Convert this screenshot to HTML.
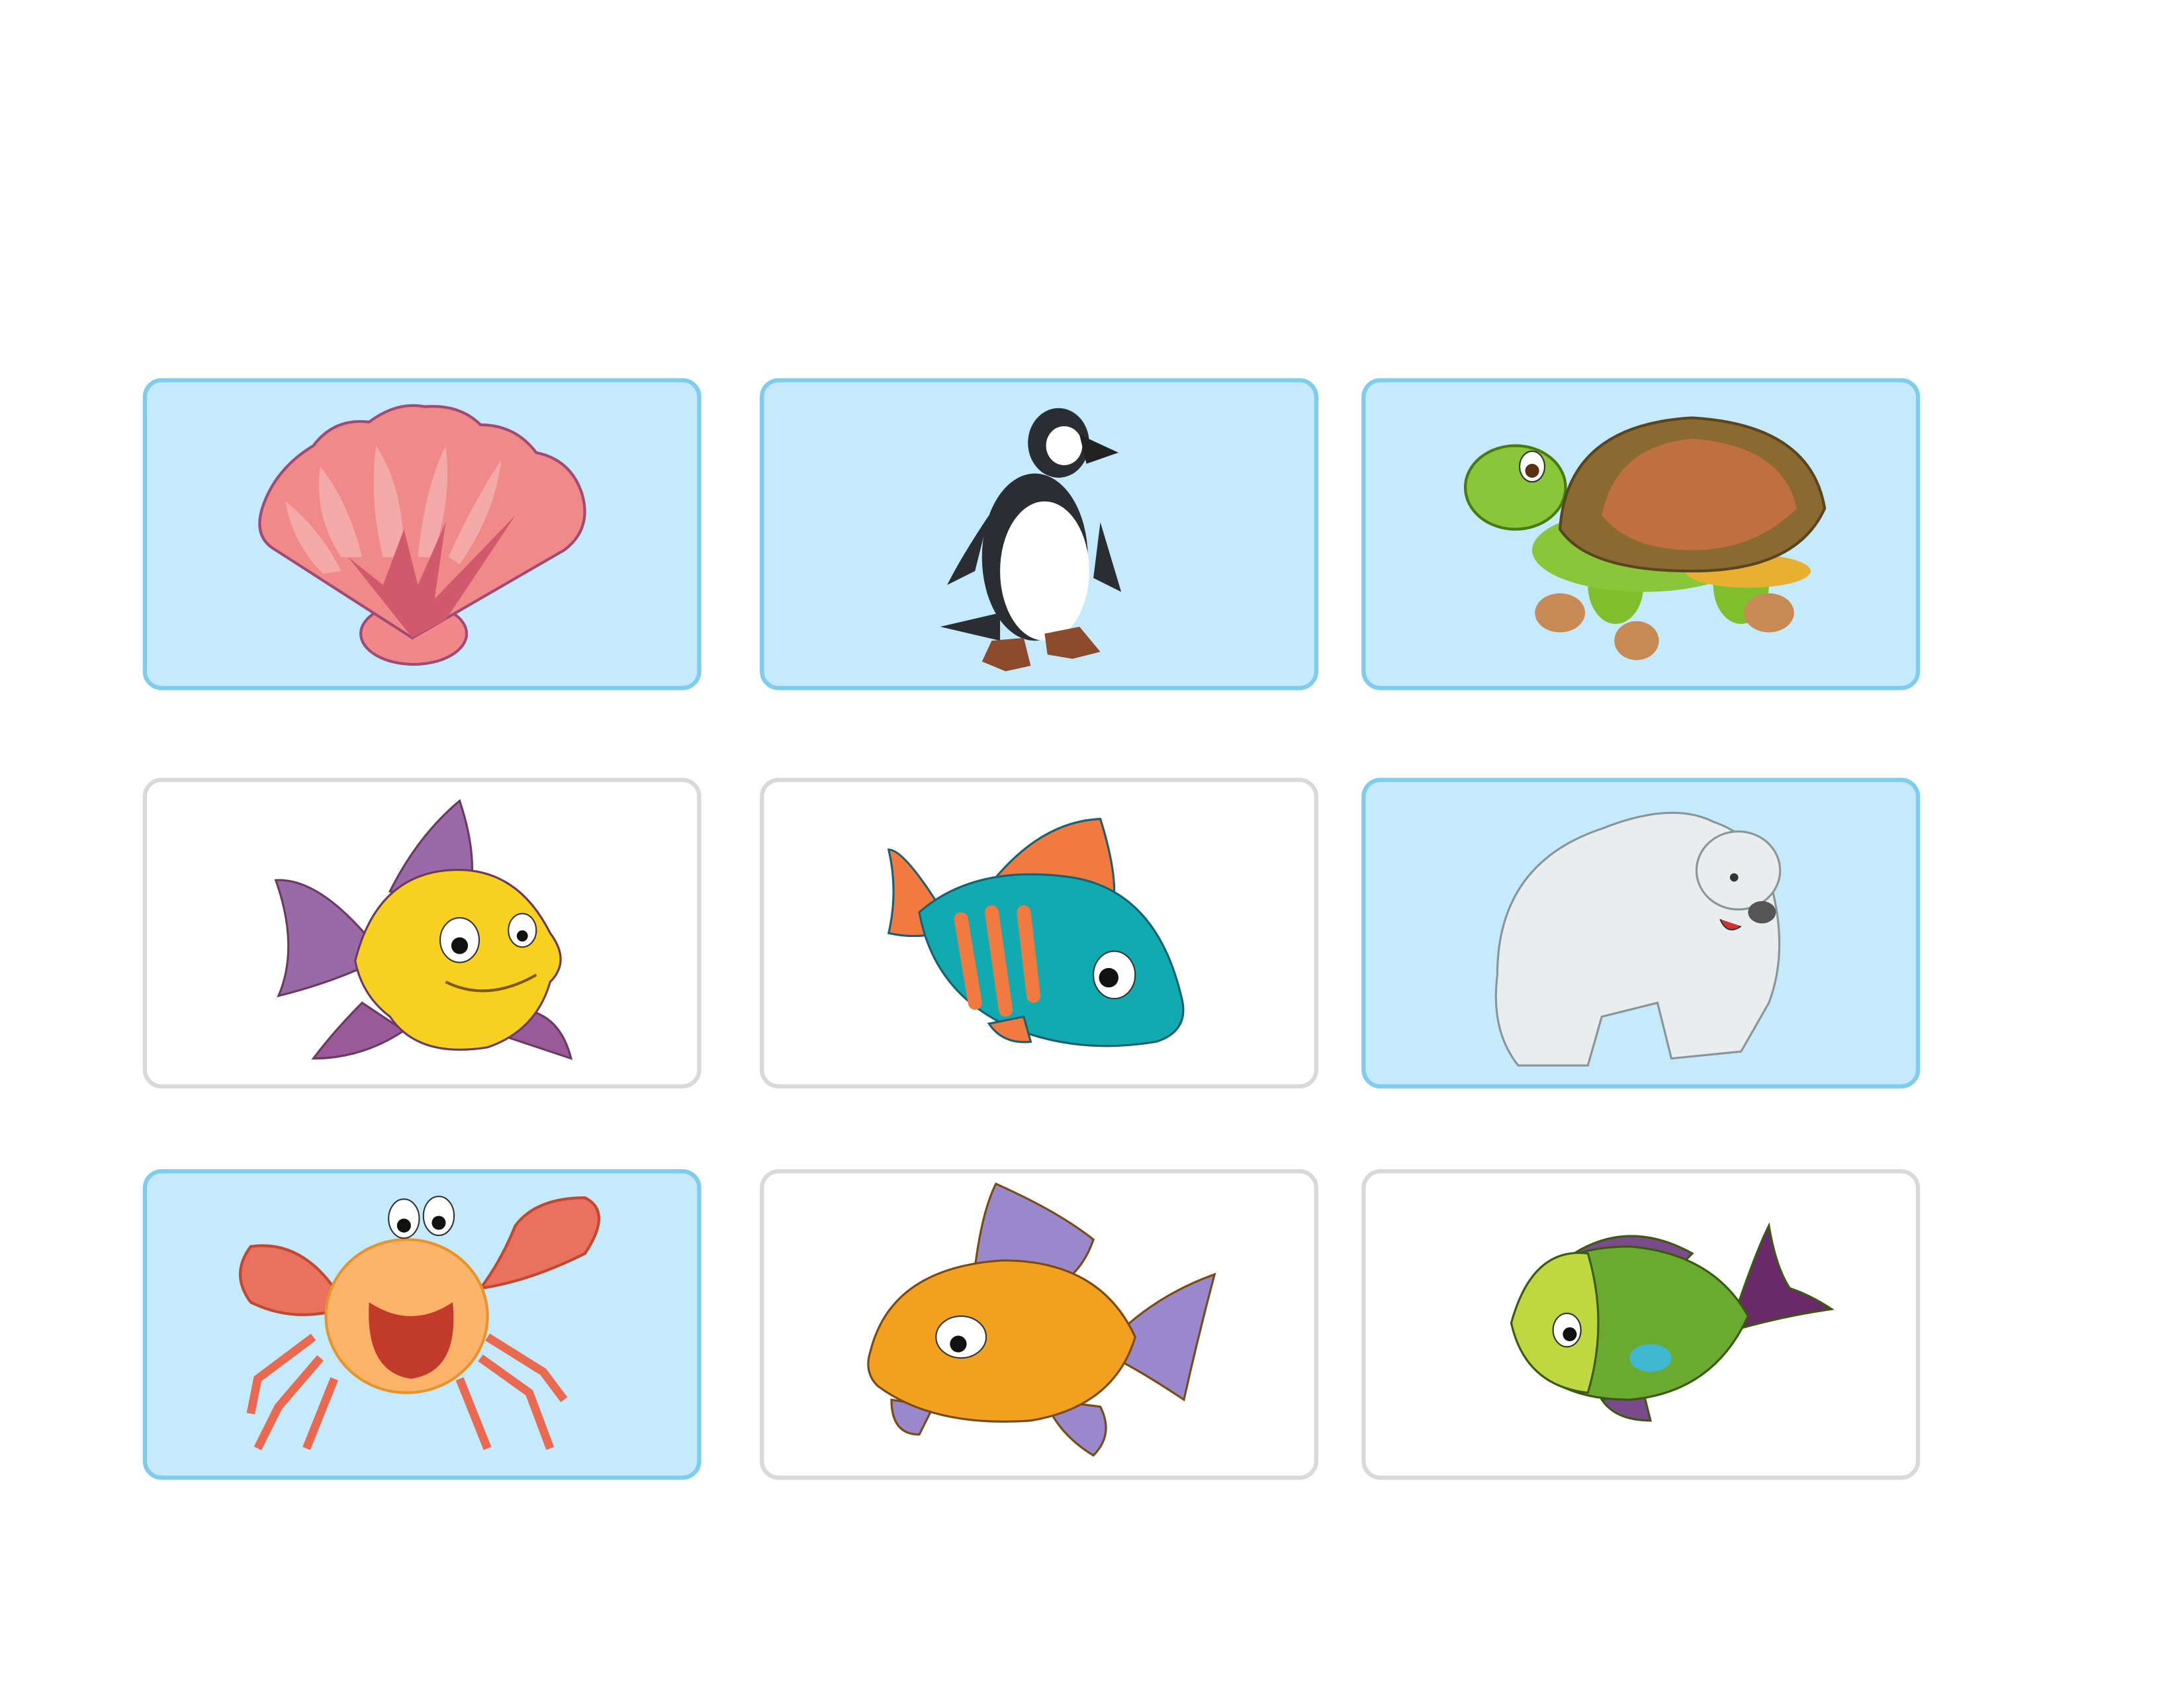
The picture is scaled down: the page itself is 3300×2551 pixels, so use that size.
<!DOCTYPE html>
<html><head><meta charset="utf-8"><style>
html,body{margin:0;padding:0;background:#fff;width:3300px;height:2551px;overflow:hidden}
svg{display:block}
</style></head><body>
<svg width="3300" height="2551" viewBox="0 0 1568 1212" preserveAspectRatio="none" xmlns="http://www.w3.org/2000/svg">
<g stroke-width="3">
<rect x="104" y="273" width="398" height="221" rx="12" fill="#c5eafb" stroke="#7fcdee"/>
<rect x="547" y="273" width="398" height="221" rx="12" fill="#c5eafb" stroke="#7fcdee"/>
<rect x="979" y="273" width="398" height="221" rx="12" fill="#c5eafb" stroke="#7fcdee"/>
<rect x="104" y="560" width="398" height="220" rx="12" fill="#fff" stroke="#d9d9d9"/>
<rect x="547" y="560" width="398" height="220" rx="12" fill="#fff" stroke="#d9d9d9"/>
<rect x="979" y="560" width="398" height="220" rx="12" fill="#c5eafb" stroke="#7fcdee"/>
<rect x="104" y="841" width="398" height="220" rx="12" fill="#c5eafb" stroke="#7fcdee"/>
<rect x="547" y="841" width="398" height="220" rx="12" fill="#fff" stroke="#d9d9d9"/>
<rect x="979" y="841" width="398" height="220" rx="12" fill="#fff" stroke="#d9d9d9"/>
</g>
<!-- shell -->
<g stroke="#a04a78" stroke-width="2">
<ellipse cx="297" cy="455" rx="38" ry="22" fill="#f0888a"/>
<path d="M296 458 L198 395 Q180 385 190 360 Q200 335 225 320 Q240 300 265 303 Q285 288 305 292 Q330 290 345 305 Q370 305 385 325 Q410 330 418 355 Q425 380 405 395 Z" fill="#f08a88"/>
</g>
<g fill="#f4aaa8"><path d="M230 335 Q250 360 260 400 L245 400 Q225 370 230 335Z"/><path d="M270 320 Q290 350 290 400 L275 400 Q265 360 270 320Z"/><path d="M320 320 Q325 360 310 400 L300 400 Q305 350 320 320Z"/><path d="M360 330 Q355 370 330 405 L322 400 Q340 360 360 330Z"/><path d="M205 360 Q230 380 245 410 L232 412 Q210 390 205 360Z"/></g>
<path d="M296 458 L250 400 L275 420 L290 380 L300 420 L320 375 L312 430 L370 370 L320 445Z" fill="#d05a6c"/>
<!-- penguin -->
<g>
<ellipse cx="743" cy="400" rx="38" ry="60" fill="#2a2e33"/>
<ellipse cx="750" cy="410" rx="32" ry="50" fill="#fff"/>
<ellipse cx="760" cy="318" rx="22" ry="25" fill="#2a2e33"/>
<ellipse cx="764" cy="320" rx="13" ry="14" fill="#fff"/>
<path d="M775 312 L803 325 L780 333Z" fill="#222"/>
<path d="M710 370 Q690 400 680 420 L700 410Z" fill="#2a2e33"/>
<path d="M718 440 L675 450 L718 460Z" fill="#2a2e33"/>
<path d="M790 375 L805 425 L785 415Z" fill="#2a2e33"/>
<path d="M712 460 L735 458 L740 478 L722 482 L705 475Z" fill="#8b4a2b"/>
<path d="M750 455 L775 450 L790 468 L770 473 L752 470Z" fill="#8b4a2b"/>
</g>
<!-- turtle -->
<g>
<ellipse cx="1160" cy="420" rx="20" ry="28" fill="#7fbf2b"/>
<ellipse cx="1250" cy="420" rx="20" ry="28" fill="#7fbf2b"/>
<ellipse cx="1180" cy="395" rx="80" ry="30" fill="#8ac63a"/>
<ellipse cx="1120" cy="440" rx="18" ry="14" fill="#c88a55"/>
<ellipse cx="1175" cy="460" rx="16" ry="14" fill="#c88a55"/>
<ellipse cx="1270" cy="440" rx="18" ry="14" fill="#c88a55"/>
<ellipse cx="1255" cy="410" rx="45" ry="12" fill="#e8b030"/>
<ellipse cx="1088" cy="350" rx="36" ry="30" fill="#8ac63a" stroke="#4a7a10" stroke-width="2"/>
<ellipse cx="1100" cy="335" rx="9" ry="11" fill="#fff" stroke="#333"/>
<circle cx="1100" cy="338" r="5" fill="#5a3010"/>
<path d="M1120 380 Q1125 305 1215 300 Q1300 305 1310 365 Q1290 410 1215 410 Q1140 410 1120 380Z" fill="#8a6a30" stroke="#5a4520" stroke-width="2"/>
<path d="M1150 370 Q1160 320 1215 315 Q1280 320 1290 365 Q1260 395 1215 395 Q1170 395 1150 370Z" fill="#c07040"/>
</g>
<!-- yellow fish -->
<g stroke="#6a3a60" stroke-width="1.5">
<path d="M280 640 Q300 600 330 575 Q345 620 335 650Z" fill="#9a6aa8"/>
<path d="M270 680 Q230 630 198 632 Q215 680 200 715 Q240 705 270 690Z" fill="#9a6aa8"/>
<path d="M260 720 Q240 740 225 760 Q260 760 290 740Z" fill="#9a5a9a"/>
<path d="M360 725 Q400 720 410 760 Q380 750 350 740Z" fill="#9a5a9a"/>
<path d="M255 690 Q270 630 320 625 Q370 620 395 670 Q410 690 395 705 Q385 740 350 752 Q300 760 280 730 Q260 715 255 690Z" fill="#f8d020"/>
</g>
<ellipse cx="330" cy="675" rx="14" ry="16" fill="#fff" stroke="#333"/><circle cx="330" cy="679" r="6" fill="#111"/>
<ellipse cx="375" cy="668" rx="10" ry="12" fill="#fff" stroke="#333"/><circle cx="375" cy="672" r="4" fill="#111"/>
<path d="M320 705 Q350 720 385 700" stroke="#7a5a00" stroke-width="2" fill="none"/>
<!-- teal fish -->
<g stroke="#1a6070" stroke-width="1.5">
<path d="M700 650 Q740 590 790 588 Q800 620 800 640Z" fill="#f07a40"/>
<path d="M680 660 Q650 610 638 610 Q645 640 638 670 Q660 675 680 668Z" fill="#f07a40"/>
<path d="M660 655 Q700 620 770 630 Q830 640 848 715 Q855 740 830 748 Q770 758 720 735 Q670 710 660 655Z" fill="#11aab0"/>
<path d="M710 735 Q720 750 740 748 L735 730Z" fill="#f07a40"/>
</g>
<path d="M690 660 L700 720 M712 655 L722 725 M735 655 L742 715" stroke="#f07a40" stroke-width="10" stroke-linecap="round"/>
<ellipse cx="800" cy="700" rx="15" ry="17" fill="#fff" stroke="#333"/><circle cx="796" cy="702" r="7" fill="#111"/>
<!-- polar bear -->
<g fill="#e9edee" stroke="#8a9598" stroke-width="1.5">
<path d="M1075 700 Q1075 620 1150 595 Q1200 575 1230 590 Q1260 600 1270 630 Q1285 680 1270 720 L1250 755 L1200 760 L1190 720 L1150 730 L1140 765 L1090 765 Q1070 740 1075 700Z"/>
<ellipse cx="1248" cy="625" rx="30" ry="28"/>
</g>
<ellipse cx="1265" cy="655" rx="10" ry="8" fill="#555"/>
<path d="M1235 660 Q1240 672 1250 665" fill="#c33" stroke="#333"/>
<circle cx="1245" cy="630" r="3" fill="#333"/>
<!-- crab -->
<g stroke="#c04a30" stroke-width="2">
<path d="M230 975 L200 1010 L185 1040 M240 990 L220 1040 M330 990 L350 1040 M345 975 L380 1000 L395 1040 M225 960 L185 990 L180 1015 M350 960 L390 985 L405 1005" stroke="#e96a50" stroke-width="6" fill="none"/>
<path d="M240 925 Q215 890 180 895 Q165 915 180 935 Q210 950 245 940Z" fill="#ea7060"/>
<path d="M345 925 Q380 920 420 900 Q440 870 420 860 Q385 860 370 880 Q360 905 345 925Z" fill="#ea7060"/>
<ellipse cx="292" cy="945" rx="58" ry="55" fill="#fbb46a" stroke="#e8942a"/>
</g>
<path d="M265 935 Q295 955 325 935 Q330 985 295 990 Q262 985 265 935Z" fill="#c23a2a"/>
<ellipse cx="290" cy="875" rx="11" ry="14" fill="#fff" stroke="#333"/><circle cx="290" cy="880" r="5" fill="#111"/>
<ellipse cx="315" cy="873" rx="11" ry="14" fill="#fff" stroke="#333"/><circle cx="315" cy="878" r="5" fill="#111"/>
<!-- orange fish -->
<g stroke="#7a4a10" stroke-width="1.5">
<path d="M700 910 Q705 870 715 850 Q760 870 785 890 Q780 905 770 915Z" fill="#9a88cc"/>
<path d="M800 960 Q830 930 872 915 Q860 960 850 1005 Q820 985 800 975Z" fill="#9a88cc"/>
<path d="M750 1005 Q760 1030 785 1045 Q800 1030 790 1010Z" fill="#9a88cc"/>
<path d="M640 1005 Q640 1030 660 1030 L670 1010Z" fill="#9a88cc"/>
<path d="M625 970 Q640 910 720 905 Q790 905 815 960 Q800 1010 740 1020 Q670 1025 630 995 Q620 985 625 970Z" fill="#f2a020"/>
</g>
<ellipse cx="690" cy="960" rx="18" ry="15" fill="#fff" stroke="#333"/><circle cx="688" cy="965" r="6" fill="#111"/>
<!-- green fish -->
<g stroke="#3a5a10" stroke-width="1.5">
<path d="M1130 900 Q1170 875 1215 900 L1200 915Z" fill="#7a4a8a"/>
<path d="M1245 945 Q1260 900 1270 880 Q1275 910 1285 925 Q1300 930 1315 940 Q1280 945 1245 955Z" fill="#6a2a6a"/>
<path d="M1150 1005 Q1160 1020 1185 1020 L1180 1000Z" fill="#7a4a8a"/>
<path d="M1085 950 Q1100 895 1170 895 Q1230 900 1255 945 Q1230 1000 1170 1005 Q1100 1005 1085 950Z" fill="#6aaa30"/>
<path d="M1085 950 Q1100 895 1140 900 Q1155 950 1140 1000 Q1095 995 1085 950Z" fill="#c0d840"/>
</g>
<ellipse cx="1125" cy="955" rx="10" ry="12" fill="#fff" stroke="#333"/><circle cx="1127" cy="958" r="5" fill="#111"/>
<ellipse cx="1185" cy="975" rx="15" ry="10" fill="#40b8d0"/>
</svg>
</body></html>
